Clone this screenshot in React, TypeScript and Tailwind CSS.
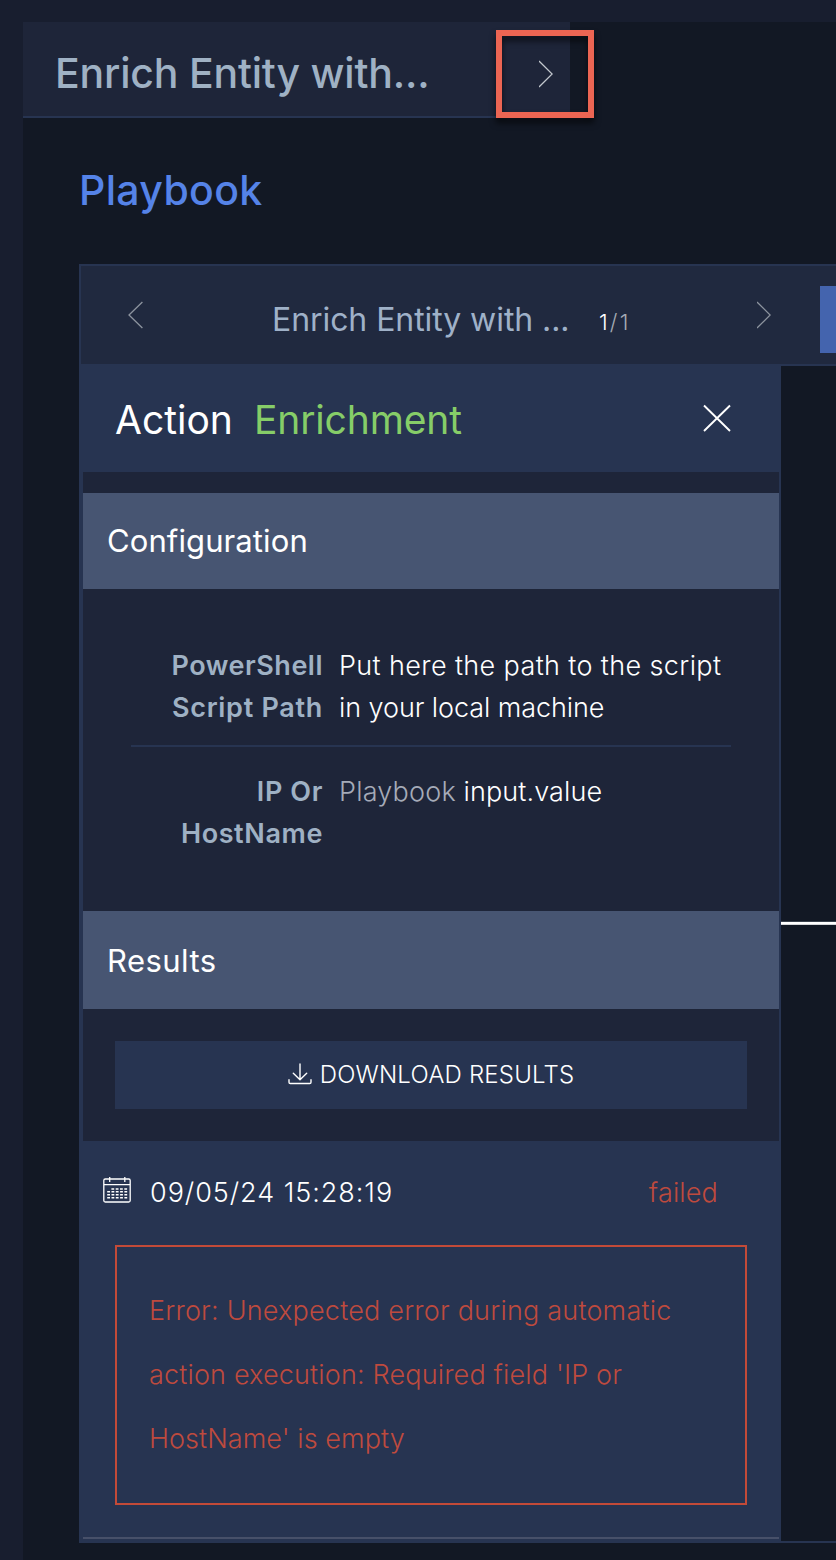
import React from "react";

type IconProps = { className?: string };

const ChevronRight = ({ className }: IconProps) => (
  <svg className={className} width="14" height="28" viewBox="0 0 14 28" fill="none" stroke="currentColor" strokeWidth="1.3">
    <path d="M0 1 13.2 14 0 27" />
  </svg>
);

const ChevronLeft = ({ className }: IconProps) => (
  <svg className={className} width="15" height="28" viewBox="0 0 15 28" fill="none" stroke="currentColor" strokeWidth="1.3">
    <path d="M14.4 1 1 14l13.4 13" />
  </svg>
);

const CloseIcon = () => (
  <svg className="-mt-0.5" width="28" height="28" viewBox="0 0 28 28" fill="none" stroke="#fff" strokeWidth="1.9">
    <path d="M1 1.5 27 27M27 1.5 1 27" />
  </svg>
);

const DownloadIcon = () => (
  <svg className="-mt-[3px]" width="24" height="22" viewBox="0 0 24 22" fill="none" stroke="#fff" strokeWidth="1.4" strokeLinecap="round" strokeLinejoin="round">
    <path d="M12 1v15.5M5.3 10.3 12 16.8l6.7-6.5M1 16.8v2.4q0 1.3 1.3 1.3h19.4q1.3 0 1.3-1.3v-2.4" />
  </svg>
);

const CalendarIcon = () => (
  <svg width="28" height="26" viewBox="0 0 28 26" fill="none" stroke="#fff" strokeWidth="1.3">
    <rect x="0.8" y="2" width="26.4" height="23" rx="1.5" />
    <path d="M1 7.7h26M6.7 0v5M21.8 0v5" />
    <path strokeWidth="1.5" strokeDasharray="2.8 1.5" d="M8.4 11.9h16M4.2 14.7h20M4.2 17.8h20M4.2 20.8h20" />
  </svg>
);

const SectionBar = ({ children, className }: { children: React.ReactNode; className: string }) => (
  <div className={`flex shrink-0 items-center bg-[#475572] pl-6 text-[31px] text-white ${className}`}>{children}</div>
);

export default function App() {
  return (
    <div className="flex h-[1560px] w-[836px] flex-col overflow-hidden whitespace-nowrap bg-[#181e2f] pl-[23px] pt-[22px] font-['Inter',sans-serif]">
      <div className="flex h-[1538px] flex-col bg-[#121824]">
        <header className="relative flex h-24 w-[547px] shrink-0 items-center justify-between border-b-2 border-[#273451] bg-[#1e2539] pl-[32px] pr-[17px]">
          <h1 className="mt-[9px] text-[41px] leading-none font-medium tracking-[-0.2px] text-[#9fb1c4]">Enrich Entity with...</h1>
          <ChevronRight className="mt-[10px] text-[#c3c8ce]" />
          <div className="absolute top-2 left-[473px] h-[88px] w-[98px] border-[6px] border-[#ec6553] drop-shadow-[0_5px_3px_rgba(0,0,0,0.6)]" />
        </header>

        <h2 className="mt-[51px] ml-[56px] h-[42px] text-[41px] leading-[42px] font-medium tracking-[0.35px] text-[#5583e8]">Playbook</h2>

        <main className="mt-[53px] ml-[56px] flex h-[1279px] shrink-0 flex-col border-y-2 border-l-2 border-[#273451]">
          <nav className="flex h-[100px] shrink-0 items-start border-b-2 border-[#273451] bg-[#20293f]">
            <ChevronLeft className="mt-[35px] ml-[47px] text-[#8d949f]" />
            <span className="mt-[34px] ml-[129px] w-[299px] text-[32px] leading-[40px] tracking-[-0.07px] text-[#9fb1c8]">Enrich Entity with ...</span>
            <span className="mt-[42px] ml-[28px] w-[36px] text-[22px] leading-[28px] font-light tracking-[2.2px] text-[#a4a9b3]">
              <span className="text-white">1</span>/1
            </span>
            <ChevronRight className="mt-[35px] ml-[122px] text-[#8d949f]" />
            <span className="mt-[20px] ml-[49px] h-[67px] w-4 bg-[#4464ae]" />
          </nav>

          <div className="flex min-h-0 grow">
            <section className="flex w-[700px] flex-col border-r-2 border-[#273451] bg-[#273451] pl-0.5">
              <div className="flex h-[106px] shrink-0 items-center pr-[48px] pl-[32px] text-[39px] leading-none">
                <span className="w-[139px] text-white">Action</span>
                <span className="grow tracking-[-0.15px] text-[#86cd68]">Enrichment</span>
                <CloseIcon />
              </div>
              <div className="flex h-[669px] shrink-0 flex-col bg-[#1e2539] pt-[21px]">
                <SectionBar className="h-24 tracking-[0.1px]">Configuration</SectionBar>
                <div className="mx-12 flex h-[322px] shrink-0 flex-col pt-[56px] text-[27px] leading-[42px]">
                  <div className="flex h-[102px] border-b-2 border-[#273451]">
                    <div className="mr-4 w-[192px] text-right font-semibold text-[#9fb1c4]">
                      <span className="tracking-[0.5px]">PowerShell</span><br />
                      <span className="tracking-[0.7px]">Script Path</span>
                    </div>
                    <div className="font-light text-white">
                      <span className="tracking-[0.37px]">Put here the path to the script</span><br />
                      <span className="tracking-[-0.08px]">in your local machine</span>
                    </div>
                  </div>
                  <div className="mt-6 flex">
                    <div className="mr-4 w-[192px] text-right font-semibold tracking-[0.6px] text-[#9fb1c4]">IP Or<br />HostName</div>
                    <div className="font-light tracking-[0.1px] text-white"><span className="tracking-[0.2px] text-[#a5abb8]">Playbook</span> input.value</div>
                  </div>
                </div>
                <SectionBar className="h-[98px] pt-0.5 tracking-[0.45px]">Results</SectionBar>
                <button className="mx-8 mt-8 flex h-[68px] shrink-0 items-center justify-center gap-2 bg-[#273451] text-[24px] font-light tracking-[0.2px] text-white">
                  <DownloadIcon />
                  <span>DOWNLOAD RESULTS</span>
                </button>
              </div>
              <div className="flex h-[398px] shrink-0 flex-col border-b-2 border-[#475069]">
                <div className="flex h-[104px] shrink-0 items-center pr-[61px] pl-5 text-[27px] font-light">
                  <div className="-mt-[7px]"><CalendarIcon /></div>
                  <span className="ml-[19px] grow tracking-[0.95px] text-white">09/05/24 15:28:19</span>
                  <span className="tracking-[0.15px] text-[#be4a3e]">failed</span>
                </div>
                <div className="mx-8 h-[260px] shrink-0 border-2 border-[#c34a38] p-8 text-[27px] leading-[64px] font-light text-[#be4a3e]">
                  <span className="tracking-[0.2px]">Error: Unexpected error during automatic</span><br />
                  <span className="tracking-[0.16px]">action execution: Required field 'IP or</span><br />
                  <span className="tracking-[0.06px]">HostName' is empty</span>
                </div>
              </div>
            </section>
            <div className="grow pt-[555px]">
              <div className="h-[4px] border-t border-b border-t-[#38404b] border-b-[#d5d7da] bg-white" />
            </div>
          </div>
        </main>
      </div>
    </div>
  );
}
